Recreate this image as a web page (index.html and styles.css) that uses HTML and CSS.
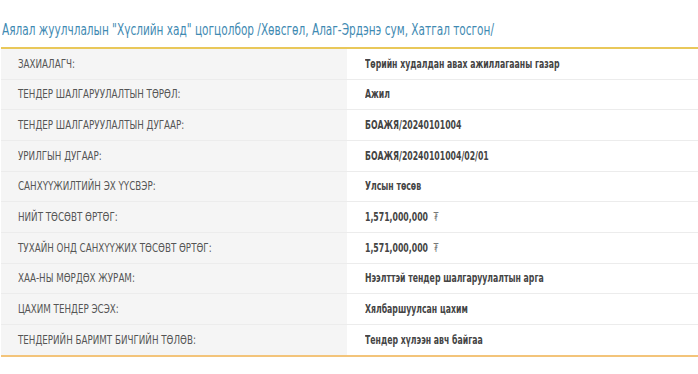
FILE: index.html
```html
<!DOCTYPE html>
<html lang="mn">
<head>
<meta charset="utf-8">
<link rel="stylesheet" href="styles.css">
</head>
<body>
<div class="page">
  <h1 class="title"><span class="t">Аялал жуулчлалын "Хүслийн хад" цогцолбор /Хөвсгөл, Алаг-Эрдэнэ сум, Хатгал тосгон/</span></h1>
  <div class="table">
    <div class="row"><div class="label"><span class="t">ЗАХИАЛАГЧ:</span></div><div class="value"><span class="t">Төрийн худалдан авах ажиллагааны газар</span></div></div>
    <div class="row"><div class="label"><span class="t">ТЕНДЕР ШАЛГАРУУЛАЛТЫН ТӨРӨЛ:</span></div><div class="value"><span class="t">Ажил</span></div></div>
    <div class="row"><div class="label"><span class="t">ТЕНДЕР ШАЛГАРУУЛАЛТЫН ДУГААР:</span></div><div class="value"><span class="t">БОАЖЯ/20240101004</span></div></div>
    <div class="row"><div class="label"><span class="t">УРИЛГЫН ДУГААР:</span></div><div class="value"><span class="t">БОАЖЯ/20240101004/02/01</span></div></div>
    <div class="row"><div class="label"><span class="t">САНХҮҮЖИЛТИЙН ЭХ ҮҮСВЭР:</span></div><div class="value"><span class="t">Улсын төсөв</span></div></div>
    <div class="row"><div class="label"><span class="t">НИЙТ ТӨСӨВТ ӨРТӨГ:</span></div><div class="value"><span class="t">1,571,000,000 <span class="cur">₮</span></span></div></div>
    <div class="row"><div class="label"><span class="t">ТУХАЙН ОНД САНХҮҮЖИХ ТӨСӨВТ ӨРТӨГ:</span></div><div class="value"><span class="t">1,571,000,000 <span class="cur">₮</span></span></div></div>
    <div class="row"><div class="label"><span class="t">ХАА-НЫ МӨРДӨХ ЖУРАМ:</span></div><div class="value"><span class="t">Нээлттэй тендер шалгаруулалтын арга</span></div></div>
    <div class="row"><div class="label"><span class="t">ЦАХИМ ТЕНДЕР ЭСЭХ:</span></div><div class="value"><span class="t">Хялбаршуулсан цахим</span></div></div>
    <div class="row"><div class="label"><span class="t">ТЕНДЕРИЙН БАРИМТ БИЧГИЙН ТӨЛӨВ:</span></div><div class="value"><span class="t">Тендер хүлээн авч байгаа</span></div></div>
  </div>
</div>
</body>
</html>
```

FILE: styles.css
```css
html, body {
  margin: 0;
  padding: 0;
  background: #ffffff;
}
.page {
  padding-top: 20px;
  font-family: "DejaVu Sans", sans-serif;
  font-stretch: condensed;
}
.t {
  display: inline-block;
  white-space: nowrap;
  transform-origin: 0 50%;
}
.title {
  margin: 0;
  padding: 0 0 0 2px;
  height: 27px;
  font-size: 15px;
  font-weight: normal;
  line-height: 20px;
  color: #3f8ab2;
  white-space: nowrap;
}
.title .t {
  transform: scaleX(0.78);
}
.table {
  border-top: 2px solid #e9c85a;
  border-bottom: 2px solid #f3c47a;
  margin-left: 1px;
}
.row {
  display: grid;
  grid-template-columns: 346px 1fr;
  height: 29.67px;
  border-bottom: 1px solid #ececec;
}
.row:last-child {
  border-bottom: none;
}
.label {
  background: #f5f5f5;
  color: #555555;
  font-size: 12px;
  padding-left: 17px;
  display: flex;
  align-items: center;
}
.label .t {
  transform: scaleX(0.81);
}
.value {
  color: #444444;
  font-size: 12px;
  font-weight: bold;
  padding-left: 18px;
  display: flex;
  align-items: center;
}
.value .t {
  transform: scaleX(0.72);
}
.cur {
  font-weight: normal;
  color: #777777;
  margin-left: 4px;
}
```
